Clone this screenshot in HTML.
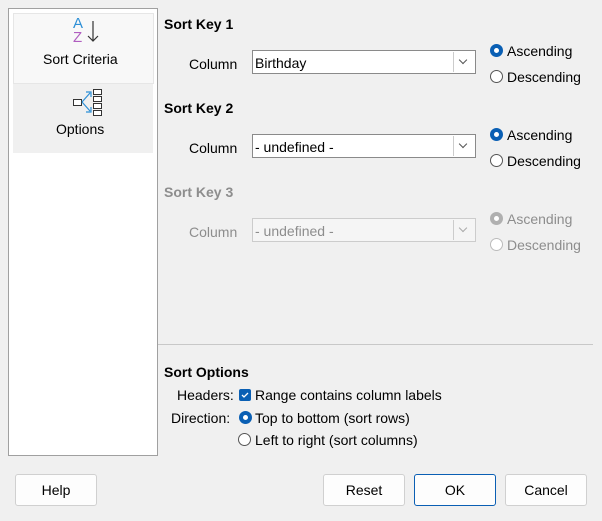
<html><head><style>
body{margin:0;width:602px;height:521px;background:#f0f0f0;font-family:"Liberation Sans",sans-serif;font-size:14px;color:#000;position:relative;overflow:hidden}
.a{position:absolute;white-space:nowrap}
.b{font-weight:bold}
.g{color:#8d8d8d}
.combo{position:absolute;left:252px;width:224px;height:24px;border:1px solid #8a8a8a;background:#fff;box-sizing:border-box}
.combo span{position:absolute;left:2px;top:4px}
.combo i{position:absolute;right:1px;top:1px;width:20px;height:20px;border-left:1px solid #ccc;background:#fff}
.combo i:after{content:"";position:absolute;left:6px;top:5px;width:5px;height:5px;border-right:1px solid #555;border-bottom:1px solid #555;transform:rotate(45deg)}
.dis{border-color:#ccc;background:#f5f5f5}
.dis i{background:#f5f5f5}
.dis i:after{border-color:#aaa}
.r{position:absolute;width:11px;height:11px;border:1px solid #555;border-radius:50%;background:#fff}
.r.on{border:4px solid #0a5fb4;width:5px;height:5px}
.r.d{border-color:#bbb}
.r.d.on{border-color:#b0b0b0}
.btn{position:absolute;top:474px;height:32px;width:82px;border:1px solid #d0d0d0;border-radius:3px;background:#fdfdfd;box-sizing:border-box;text-align:center;line-height:30px}
</style></head><body>
<div class="a" style="left:8px;top:8px;width:148px;height:446px;border:1px solid #a0a0a0;background:#fff"></div>
<div class="a" style="left:13px;top:13px;width:139px;height:69px;background:#f8f8f8;border:1px solid #e6e6e6"></div>
<div class="a" style="left:13px;top:84px;width:140px;height:69px;background:#f0f0f0"></div>
<div class="a" style="left:73px;top:17px;font-size:15px;color:#2d8fd6;line-height:13px">A</div>
<div class="a" style="left:73px;top:31px;font-size:15px;color:#b05ec0;line-height:13px">Z</div>
<svg class="a" style="left:86px;top:20px" width="14" height="24"><path d="M7 1V21M2 16L7 21L12 16" stroke="#333" fill="none" stroke-width="1.2"/></svg>
<div class="a" style="left:43px;top:51px">Sort Criteria</div>
<svg class="a" style="left:72px;top:88px" width="30" height="28"><rect x="1.5" y="11.5" width="8" height="6" fill="#fff" stroke="#333"/><rect x="21.5" y="1.5" width="8" height="5" fill="#fff" stroke="#333"/><rect x="21.5" y="8.5" width="8" height="5" fill="#fff" stroke="#333"/><rect x="21.5" y="15.5" width="8" height="5" fill="#fff" stroke="#333"/><rect x="21.5" y="22.5" width="8" height="5" fill="#fff" stroke="#333"/><path d="M10 14L18 5M10 14L18 23M14 4H19V9M14 24H19V19" stroke="#2d8fd6" fill="none" stroke-width="1.2"/></svg>
<div class="a" style="left:56px;top:121px">Options</div>

<div class="a b" style="left:164px;top:16px">Sort Key 1</div>
<div class="a" style="left:189px;top:56px">Column</div>
<div class="combo" style="top:50px"><span>Birthday</span><i></i></div>
<div class="r on" style="left:490px;top:44px"></div><div class="a" style="left:507px;top:43px">Ascending</div>
<div class="r" style="left:490px;top:70px"></div><div class="a" style="left:507px;top:69px">Descending</div>

<div class="a b" style="left:164px;top:100px">Sort Key 2</div>
<div class="a" style="left:189px;top:140px">Column</div>
<div class="combo" style="top:134px"><span>- undefined -</span><i></i></div>
<div class="r on" style="left:490px;top:128px"></div><div class="a" style="left:507px;top:127px">Ascending</div>
<div class="r" style="left:490px;top:154px"></div><div class="a" style="left:507px;top:153px">Descending</div>

<div class="a b g" style="left:164px;top:184px">Sort Key 3</div>
<div class="a g" style="left:189px;top:224px">Column</div>
<div class="combo dis" style="top:218px"><span class="g">- undefined -</span><i></i></div>
<div class="r on d" style="left:490px;top:212px"></div><div class="a g" style="left:507px;top:211px">Ascending</div>
<div class="r d" style="left:490px;top:238px"></div><div class="a g" style="left:507px;top:237px">Descending</div>

<div class="a" style="left:158px;top:344px;width:435px;height:1px;background:#c8c8c8"></div>
<div class="a b" style="left:164px;top:364px">Sort Options</div>
<div class="a" style="left:177px;top:387px">Headers:</div>
<div class="a" style="left:239px;top:389px;width:12px;height:12px;background:#0a5fb4;border-radius:2px"><svg width="12" height="12" style="position:absolute"><path d="M3 6L5 8L9 4" stroke="#fff" fill="none" stroke-width="1.3"/></svg></div>
<div class="a" style="left:255px;top:387px">Range contains column labels</div>
<div class="a" style="left:171px;top:410px">Direction:</div>
<div class="r on" style="left:239px;top:411px"></div><div class="a" style="left:255px;top:410px">Top to bottom (sort rows)</div>
<div class="r" style="left:238px;top:433px"></div><div class="a" style="left:255px;top:432px">Left to right (sort columns)</div>

<div class="btn" style="left:15px">Help</div>
<div class="btn" style="left:323px">Reset</div>
<div class="btn" style="left:414px;border-color:#0a5fb4">OK</div>
<div class="btn" style="left:505px">Cancel</div>
</body></html>
